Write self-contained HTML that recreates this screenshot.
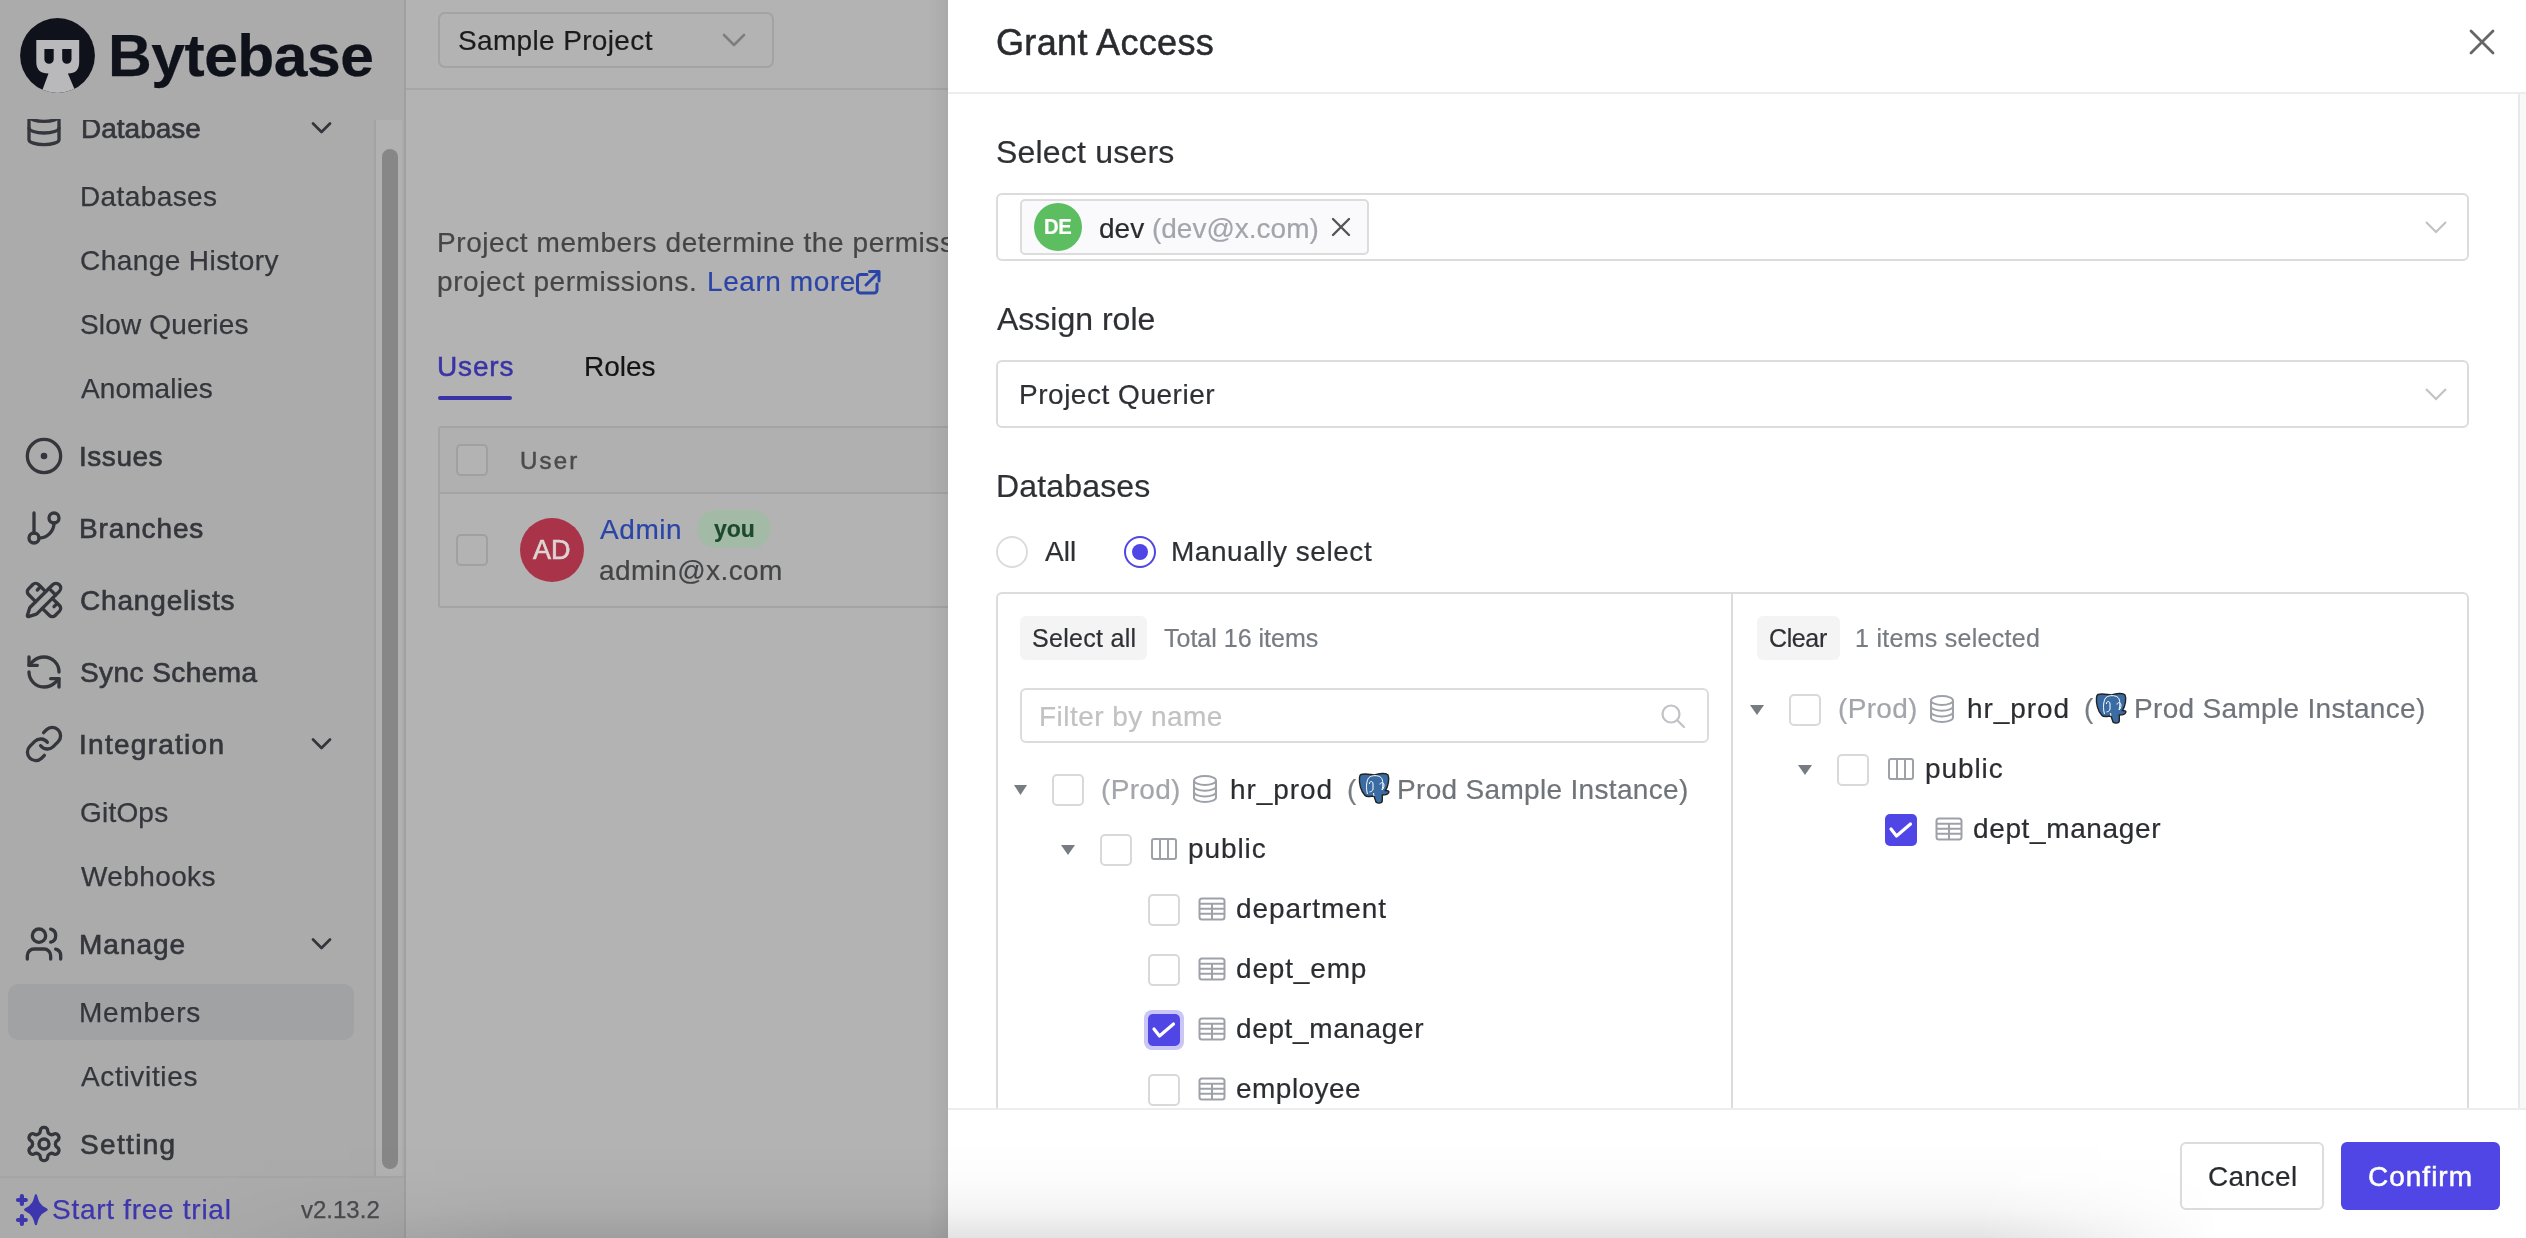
<!DOCTYPE html>
<html><head><meta charset="utf-8">
<style>
*{box-sizing:border-box;margin:0;padding:0}
html,body{width:2526px;height:1238px;overflow:hidden;background:#b3b3b3;font-family:"Liberation Sans",sans-serif}
.a{position:absolute}
.t{position:absolute;line-height:1;white-space:nowrap;-webkit-text-stroke:0.2px currentColor}
.med{-webkit-text-stroke:0.65px currentColor}
#sbtext .t{-webkit-text-stroke-width:0.25px;-webkit-text-stroke-color:currentColor}
#sbtext .t.med{-webkit-text-stroke-width:0.65px}
.med2{-webkit-text-stroke:0.5px currentColor}
svg{position:absolute;left:0;top:0;overflow:visible}
</style></head><body><div style="position:absolute;left:0;top:0;width:2526px;height:1238px;will-change:transform">

<!-- ============ SIDEBAR (dimmed) ============ -->
<div class="a" id="sidebar" style="left:0;top:0;width:404px;height:1238px;background:#ababac"></div>
<div class="a" style="left:404px;top:0;width:2px;height:1238px;background:#a0a0a1"></div>
<!-- members highlight -->
<div class="a" style="left:8px;top:984px;width:346px;height:56px;border-radius:10px;background:#a1a2a4"></div>
<!-- scroll track -->
<div class="a" style="left:374px;top:120px;width:28px;height:1056px;background:#b1b1b1;border-left:2px solid #a3a3a4"></div>
<div class="a" style="left:382px;top:149px;width:16px;height:1020px;border-radius:8px;background:#878787"></div>
<!-- footer divider -->
<div class="a" style="left:0;top:1176px;width:404px;height:2px;background:#a5a5a7"></div>

<div id="sbtext" style="color:#34363b">
  <div class="a" style="left:0;top:120px;width:374px;height:1056px;overflow:hidden">
    <div class="t med" style="left:81px;top:-5px;font-size:28px">Database</div>
  </div>
  <div class="t" style="left:80px;top:183px;letter-spacing:0.4px;font-size:28px">Databases</div>
  <div class="t" style="left:80px;top:247px;letter-spacing:0.43px;font-size:28px">Change History</div>
  <div class="t" style="left:80px;top:311px;letter-spacing:0.18px;font-size:28px">Slow Queries</div>
  <div class="t" style="left:81px;top:375px;letter-spacing:0.12px;font-size:28px">Anomalies</div>
  <div class="t med" style="left:79px;top:443px;letter-spacing:0.54px;font-size:28px">Issues</div>
  <div class="t med" style="left:79px;top:515px;letter-spacing:0.86px;font-size:28px">Branches</div>
  <div class="t med" style="left:80px;top:587px;letter-spacing:0.83px;font-size:28px">Changelists</div>
  <div class="t med" style="left:80px;top:659px;letter-spacing:0.44px;font-size:28px">Sync Schema</div>
  <div class="t med" style="left:79px;top:731px;letter-spacing:1.27px;font-size:28px">Integration</div>
  <div class="t" style="left:80px;top:799px;letter-spacing:0.2px;font-size:28px">GitOps</div>
  <div class="t" style="left:81px;top:863px;letter-spacing:0.39px;font-size:28px">Webhooks</div>
  <div class="t med" style="left:79px;top:931px;letter-spacing:1px;font-size:28px">Manage</div>
  <div class="t" style="left:79px;top:999px;letter-spacing:0.77px;font-size:28px">Members</div>
  <div class="t" style="left:81px;top:1063px;letter-spacing:0.67px;font-size:28px">Activities</div>
  <div class="t med" style="left:80px;top:1131px;letter-spacing:1.33px;font-size:28px">Setting</div>
  <div class="t" style="left:52px;top:1196px;letter-spacing:0.72px;font-size:28px;color:#3d36ad">Start free trial</div>
  <div class="t" style="left:301px;top:1198px;font-size:24px;color:#4a4b4f">v2.13.2</div>
  <div class="t" style="left:108px;top:25.5px;font-size:60px;font-weight:bold;color:#0f121a;transform:scaleX(1.01);transform-origin:0 0;letter-spacing:-0.5px">Bytebase</div>
</div>

<svg width="406" height="1238" viewBox="0 0 406 1238">
  <!-- logo -->
  <defs><clipPath id="lc"><circle cx="57.5" cy="55.5" r="37.4"/></clipPath></defs>
  <circle cx="57.5" cy="55.5" r="37.4" fill="#0f121a"/>
  <path clip-path="url(#lc)" d="M36.3,40 H79.2 V62 Q79.2,73.5 67.9,73.5 L77,95 H40.5 L48.5,73.5 Q36.3,73.5 36.3,62 Z" fill="#b9b9bc"/>
  <path d="M44.4,48.9 H53.7 V59.2 A4.65,4.65 0 0 1 44.4,59.2 Z M62.2,48.9 H71.5 V59.2 A4.65,4.65 0 0 1 62.2,59.2 Z" fill="#0f121a"/>
  <g fill="none" stroke="#34363b" stroke-width="3.3" stroke-linecap="round" stroke-linejoin="round">
    <!-- database icon (clipped) -->
    <g transform="translate(24,108) scale(1.6667)" clip-path="url(#dbc)">
      <ellipse cx="12" cy="5" rx="9" ry="3" stroke-width="2"/>
      <path d="M3 5V19A9 3 0 0 0 21 19V5" stroke-width="2"/>
      <path d="M3 12A9 3 0 0 0 21 12" stroke-width="2"/>
    </g>
    <!-- chevrons -->
    <path d="M313,123.5 L321.5,132 L330,123.5" stroke-width="2.7"/>
    <path d="M313,739.5 L321.5,748 L330,739.5" stroke-width="2.7"/>
    <path d="M313,939.5 L321.5,948 L330,939.5" stroke-width="2.7"/>
    <!-- issues circle-dot -->
    <g transform="translate(24,436) scale(1.6667)">
      <circle cx="12" cy="12" r="10" stroke-width="2"/>
      <circle cx="12" cy="12" r="1" stroke-width="2"/>
    </g>
    <!-- branches -->
    <g transform="translate(24,508) scale(1.6667)">
      <line x1="6" x2="6" y1="3" y2="15" stroke-width="2"/>
      <circle cx="18" cy="6" r="3" stroke-width="2"/>
      <circle cx="6" cy="18" r="3" stroke-width="2"/>
      <path d="M18 9a9 9 0 0 1-9 9" stroke-width="2"/>
    </g>
    <!-- changelists pencil-ruler -->
    <g transform="translate(24,580) scale(1.6667)" stroke-width="2">
      <path d="M13 7 8.7 2.7a2.41 2.41 0 0 0-3.4 0L2.7 5.3a2.41 2.41 0 0 0 0 3.4L7 13"/>
      <path d="m8 6 2-2"/><path d="m18 16 2-2"/>
      <path d="m17 11 4.3 4.3c.94.94.94 2.46 0 3.4l-2.6 2.6c-.94.94-2.46.94-3.4 0L11 17"/>
      <path d="M21.174 6.812a1 1 0 0 0-3.986-3.987L3.842 16.174a2 2 0 0 0-.5.83l-1.321 4.352a.5.5 0 0 0 .623.622l4.353-1.32a2 2 0 0 0 .83-.497z"/>
      <path d="m15 5 4 4"/>
    </g>
    <!-- sync refresh-ccw -->
    <g transform="translate(24,652) scale(1.6667)" stroke-width="2">
      <path d="M21 12a9 9 0 0 0-9-9 9.75 9.75 0 0 0-6.74 2.74L3 8"/>
      <path d="M3 3v5h5"/>
      <path d="M3 12a9 9 0 0 0 9 9 9.75 9.75 0 0 0 6.74-2.74L21 16"/>
      <path d="M16 16h5v5"/>
    </g>
    <!-- integration link -->
    <g transform="translate(24,724) scale(1.6667)" stroke-width="2">
      <path d="M10 13a5 5 0 0 0 7.54.54l3-3a5 5 0 0 0-7.07-7.07l-1.72 1.71"/>
      <path d="M14 11a5 5 0 0 0-7.54-.54l-3 3a5 5 0 0 0 7.07 7.07l1.71-1.71"/>
    </g>
    <!-- manage users -->
    <g transform="translate(24,924) scale(1.6667)" stroke-width="2">
      <path d="M16 21v-2a4 4 0 0 0-4-4H6a4 4 0 0 0-4 4v2"/>
      <circle cx="9" cy="7" r="4"/>
      <path d="M22 21v-2a4 4 0 0 0-3-3.87"/>
      <path d="M16 3.13a4 4 0 0 1 0 7.75"/>
    </g>
    <!-- settings -->
    <g transform="translate(24,1124) scale(1.6667)" stroke-width="2">
      <path d="M12.22 2h-.44a2 2 0 0 0-2 2v.18a2 2 0 0 1-1 1.73l-.43.25a2 2 0 0 1-2 0l-.15-.08a2 2 0 0 0-2.73.73l-.22.38a2 2 0 0 0 .73 2.73l.15.1a2 2 0 0 1 1 1.72v.51a2 2 0 0 1-1 1.74l-.15.09a2 2 0 0 0-.73 2.73l.22.38a2 2 0 0 0 2.73.73l.15-.08a2 2 0 0 1 2 0l.43.25a2 2 0 0 1 1 1.73V20a2 2 0 0 0 2 2h.44a2 2 0 0 0 2-2v-.18a2 2 0 0 1 1-1.73l.43-.25a2 2 0 0 1 2 0l.15.08a2 2 0 0 0 2.73-.73l.22-.39a2 2 0 0 0-.73-2.73l-.15-.08a2 2 0 0 1-1-1.74v-.5a2 2 0 0 1 1-1.74l.15-.09a2 2 0 0 0 .73-2.73l-.22-.38a2 2 0 0 0-2.73-.73l-.15.08a2 2 0 0 1-2 0l-.43-.25a2 2 0 0 1-1-1.73V4a2 2 0 0 0-2-2z"/>
      <circle cx="12" cy="12" r="3"/>
    </g>
  </g>
  <defs><clipPath id="dbc"><rect x="-2" y="6.6" width="30" height="30"/></clipPath></defs>
  <!-- sparkles -->
  <path d="M35.9,1195.5 C37,1200 38,1205.5 46.5,1209.7 C38,1213.9 37,1219.4 35.9,1224 C34.8,1219.4 33.8,1213.9 25.3,1209.7 C33.8,1205.5 34.8,1200 35.9,1195.5 Z" fill="#3d36ad" stroke="#3d36ad" stroke-width="2.4" stroke-linejoin="round"/>
  <g stroke="#3d36ad" stroke-width="4.2" stroke-linecap="round">
    <path d="M18,1200 H25.8 M21.9,1196.1 V1203.9 M18,1220 H25.8 M21.9,1216.1 V1223.9"/>
  </g>
</svg>

<!-- ============ MAIN (dimmed) ============ -->
<div class="a" style="left:406px;top:88px;width:542px;height:2px;background:#a6a6a6"></div>
<div class="a" style="left:438px;top:12px;width:336px;height:56px;border:2px solid #a3a3a3;border-radius:7px"></div>
<div class="t" style="left:458px;top:27px;letter-spacing:0.35px;font-size:28px;color:#1b1b1b">Sample Project</div>
<svg width="948" height="1238"><path d="M724,35 L734,45 L744,35" fill="none" stroke="#7e7e7e" stroke-width="2.6" stroke-linecap="round" stroke-linejoin="round"/></svg>

<div class="t" style="left:437px;top:229px;letter-spacing:0.57px;font-size:28px;color:#454546">Project members determine the permissions of users within this project, including their</div>
<div class="t" style="left:437px;top:268px;letter-spacing:0.57px;font-size:28px;color:#454546">project permissions.</div>
<div class="t" style="left:707px;top:268px;letter-spacing:0.58px;font-size:28px;color:#2a44a8">Learn more</div>
<svg width="948" height="1238"><g fill="none" stroke="#2a44a8" stroke-width="3" stroke-linecap="round" stroke-linejoin="round">
  <path d="M867,274.5 H860.5 A3,3 0 0 0 857.5,277.5 V290 A3,3 0 0 0 860.5,293 H874 A3,3 0 0 0 877,290 V284"/>
  <path d="M866,285 L878.5,272.5 M869.5,271.5 H879 V281"/>
</g></svg>

<div class="t med2" style="left:437px;top:353px;letter-spacing:0.85px;font-size:28px;color:#3a33a6">Users</div>
<div class="a" style="left:438px;top:396px;width:74px;height:4px;border-radius:2px;background:#3a33a6"></div>
<div class="t" style="left:584px;top:353px;font-size:28px;color:#141414">Roles</div>

<!-- table -->
<div class="a" style="left:438px;top:426px;width:600px;height:182px;border:2px solid #a4a4a4;border-radius:3px"></div>
<div class="a" style="left:440px;top:428px;width:600px;height:64px;background:#b0b0b0"></div>
<div class="a" style="left:440px;top:492px;width:600px;height:2px;background:#a4a4a4"></div>
<div class="a" style="left:456px;top:444px;width:32px;height:32px;border:2px solid #a0a0a0;border-radius:5px;background:#b3b3b3"></div>
<div class="t med2" style="left:520px;top:449px;letter-spacing:2.2px;font-size:24px;color:#4a4b4d">User</div>
<div class="a" style="left:456px;top:534px;width:32px;height:32px;border:2px solid #a0a0a0;border-radius:5px"></div>
<div class="a" style="left:520px;top:518px;width:64px;height:64px;border-radius:50%;background:#a93449"></div>
<div class="t med" style="left:533px;top:537px;font-size:27px;color:#dcd5d2;letter-spacing:0px">AD</div>
<div class="t" style="left:600px;top:516px;letter-spacing:0.58px;font-size:28px;color:#2a44a8">Admin</div>
<div class="a" style="left:697px;top:510px;width:74px;height:38px;border-radius:19px;background:#a3baa7"></div>
<div class="t" style="left:714px;top:518px;font-size:23px;font-weight:bold;color:#1c4a2c">you</div>
<div class="t" style="left:599px;top:557px;letter-spacing:0.4px;font-size:28px;color:#434446">admin@x.com</div>

<!-- drawer shadow on main -->
<div class="a" style="left:928px;top:0;width:20px;height:1238px;background:linear-gradient(to right,rgba(0,0,0,0),rgba(0,0,0,0.05))"></div>

<!-- ============ DRAWER ============ -->
<div class="a" id="drawer" style="left:948px;top:0;width:1578px;height:1238px;background:#fff">
</div>
<div class="a" style="left:948px;top:92px;width:1578px;height:2px;background:#ededee"></div>
<div class="a" style="left:2518px;top:94px;width:2px;height:1014px;background:#e9e9ec"></div>
<div class="a" style="left:2520px;top:94px;width:6px;height:1014px;background:#f8f8f9"></div>
<div class="t med2" style="left:996px;top:25px;letter-spacing:0.34px;font-size:36px;color:#292b2f">Grant Access</div>

<div class="t" style="left:996px;top:136px;letter-spacing:0.2px;font-size:32px;color:#2e3034">Select users</div>
<div class="a" style="left:996px;top:193px;width:1473px;height:68px;border:2px solid #dcdcdd;border-radius:6px"></div>
<div class="a" style="left:1020px;top:199px;width:349px;height:56px;border:2px solid #dcdcdd;border-radius:5px;background:#fafafc"></div>
<div class="a" style="left:1034px;top:203px;width:48px;height:48px;border-radius:50%;background:#5dbe61"></div>
<div class="t" style="left:1044px;top:216px;font-size:22px;font-weight:bold;color:#fff;letter-spacing:-0.5px;transform:scaleX(0.92);transform-origin:0 0">DE</div>
<div class="t" style="left:1099px;top:215px;font-size:28px;color:#292b2f">dev <span style="color:#a3a5ab">(dev@x.com)</span></div>

<div class="t" style="left:997px;top:303px;font-size:32px;color:#2e3034">Assign role</div>
<div class="a" style="left:996px;top:360px;width:1473px;height:68px;border:2px solid #dcdcdd;border-radius:6px"></div>
<div class="t" style="left:1019px;top:381px;letter-spacing:0.52px;font-size:28px;color:#2e3034">Project Querier</div>

<div class="t" style="left:996px;top:470px;letter-spacing:0.16px;font-size:32px;color:#2e3034">Databases</div>
<div class="a" style="left:996px;top:536px;width:32px;height:32px;border:2px solid #dcdcdd;border-radius:50%"></div>
<div class="t" style="left:1045px;top:538px;font-size:28px;color:#2e3034">All</div>
<div class="a" style="left:1124px;top:536px;width:32px;height:32px;border:2px solid #4f46e5;border-radius:50%"></div>
<div class="a" style="left:1132px;top:544px;width:16px;height:16px;border-radius:50%;background:#4f46e5"></div>
<div class="t" style="left:1171px;top:538px;letter-spacing:0.55px;font-size:28px;color:#2e3034">Manually select</div>

<!-- transfer -->
<div class="a" style="left:996px;top:592px;width:1473px;height:560px;border:2px solid #dcdcdd;border-radius:6px"></div>
<div class="a" style="left:1731px;top:594px;width:2px;height:516px;background:#dcdcdd"></div>
<div class="a" style="left:1020px;top:616px;width:127px;height:44px;border-radius:6px;background:#f4f4f4"></div>
<div class="t" style="left:1032px;top:626px;letter-spacing:0.29px;font-size:25px;color:#2e3034">Select all</div>
<div class="t" style="left:1164px;top:626px;font-size:25px;color:#767c82">Total 16 items</div>
<div class="a" style="left:1020px;top:688px;width:689px;height:55px;border:2px solid #dcdcdd;border-radius:6px"></div>
<div class="t" style="left:1039px;top:703px;letter-spacing:0.46px;font-size:28px;color:#c2c2c2">Filter by name</div>

<div class="a" style="left:1757px;top:616px;width:83px;height:44px;border-radius:6px;background:#f4f4f4"></div>
<div class="t" style="left:1769px;top:626px;letter-spacing:-0.38px;font-size:25px;color:#2e3034">Clear</div>
<div class="t" style="left:1855px;top:626px;letter-spacing:0.28px;font-size:25px;color:#767c82">1 items selected</div>

<!-- left tree -->
<div class="t" style="left:1101px;top:776px;letter-spacing:0.32px;font-size:28px;color:#a3a5ab">(Prod)</div>
<div class="t" style="left:1230px;top:776px;letter-spacing:0.92px;font-size:28px;color:#2b2d31">hr_prod</div>
<div class="t" style="left:1347px;top:776px;font-size:28px;color:#767c82">(</div>
<div class="t" style="left:1397px;top:776px;letter-spacing:0.32px;font-size:28px;color:#6f747a">Prod Sample Instance)</div>
<div class="t" style="left:1188px;top:835px;letter-spacing:0.9px;font-size:28px;color:#2b2d31">public</div>
<div class="t" style="left:1236px;top:895px;letter-spacing:0.92px;font-size:28px;color:#2b2d31">department</div>
<div class="t" style="left:1236px;top:955px;letter-spacing:0.84px;font-size:28px;color:#2b2d31">dept_emp</div>
<div class="t" style="left:1236px;top:1015px;letter-spacing:0.63px;font-size:28px;color:#2b2d31">dept_manager</div>
<div class="t" style="left:1236px;top:1075px;letter-spacing:0.47px;font-size:28px;color:#2b2d31">employee</div>

<!-- right tree -->
<div class="t" style="left:1838px;top:695px;letter-spacing:0.32px;font-size:28px;color:#a3a5ab">(Prod)</div>
<div class="t" style="left:1967px;top:695px;letter-spacing:0.92px;font-size:28px;color:#2b2d31">hr_prod</div>
<div class="t" style="left:2084px;top:695px;font-size:28px;color:#767c82">(</div>
<div class="t" style="left:2134px;top:695px;letter-spacing:0.32px;font-size:28px;color:#6f747a">Prod Sample Instance)</div>
<div class="t" style="left:1925px;top:755px;letter-spacing:0.9px;font-size:28px;color:#2b2d31">public</div>
<div class="t" style="left:1973px;top:815px;letter-spacing:0.63px;font-size:28px;color:#2b2d31">dept_manager</div>

<!-- checkboxes -->
<div class="a" style="left:1052px;top:774px;width:32px;height:32px;border:2px solid #d9d9da;border-radius:5px"></div>
<div class="a" style="left:1100px;top:834px;width:32px;height:32px;border:2px solid #d9d9da;border-radius:5px"></div>
<div class="a" style="left:1148px;top:894px;width:32px;height:32px;border:2px solid #d9d9da;border-radius:5px"></div>
<div class="a" style="left:1148px;top:954px;width:32px;height:32px;border:2px solid #d9d9da;border-radius:5px"></div>
<div class="a" style="left:1144px;top:1010px;width:40px;height:40px;border-radius:8px;background:#cac7f6"></div>
<div class="a" style="left:1148px;top:1014px;width:32px;height:32px;border-radius:5px;background:#4f46e5"></div>
<div class="a" style="left:1148px;top:1074px;width:32px;height:32px;border:2px solid #d9d9da;border-radius:5px"></div>

<div class="a" style="left:1789px;top:694px;width:32px;height:32px;border:2px solid #d9d9da;border-radius:5px"></div>
<div class="a" style="left:1837px;top:754px;width:32px;height:32px;border:2px solid #d9d9da;border-radius:5px"></div>
<div class="a" style="left:1885px;top:814px;width:32px;height:32px;border-radius:5px;background:#4f46e5"></div>

<!-- drawer vector icons -->
<svg width="2526" height="1238">
  <!-- header close -->
  <path d="M2471,31 L2493,53 M2493,31 L2471,53" stroke="#666" stroke-width="2.8" stroke-linecap="round"/>
  <!-- tag close -->
  <path d="M1333,219 L1349,235 M1349,219 L1333,235" stroke="#555" stroke-width="2.4" stroke-linecap="round"/>
  <!-- select arrows -->
  <path d="M2426,222 L2436,232 L2446,222" fill="none" stroke="#c2c2c6" stroke-width="2.2"/>
  <path d="M2426,389 L2436,399 L2446,389" fill="none" stroke="#c2c2c6" stroke-width="2.2"/>
  <!-- search -->
  <circle cx="1671" cy="714" r="8.5" fill="none" stroke="#c2c2c6" stroke-width="2.2"/>
  <path d="M1677.5,720.5 L1684,727" stroke="#c2c2c6" stroke-width="2.2" stroke-linecap="round"/>
  <!-- carets -->
  <g fill="#767c82">
    <path d="M1014,785 H1027 L1020.5,795 Z"/>
    <path d="M1061,845 H1075 L1068,855 Z"/>
    <path d="M1750,705 H1764 L1757,715 Z"/>
    <path d="M1798,765 H1812 L1805,775 Z"/>
  </g>
  <!-- checkmarks -->
  <g fill="none" stroke="#fff" stroke-width="3.2" stroke-linecap="round" stroke-linejoin="round">
    <path d="M1154,1029 L1159.5,1036 L1173.5,1024"/>
    <path d="M1891,829 L1896.5,836 L1910.5,824"/>
  </g>
  <g fill="none" stroke="#9ea2a8" stroke-width="2">
    <!-- db icons -->
    <g id="dbi">
      <ellipse cx="1205" cy="780.5" rx="11" ry="4.5"/>
      <path d="M1194,780.5 V797.5 A11,4.5 0 0 0 1216,797.5 V780.5"/>
      <path d="M1194,786.2 A11,4.5 0 0 0 1216,786.2"/>
      <path d="M1194,791.9 A11,4.5 0 0 0 1216,791.9"/>
    </g>
    <use href="#dbi" x="737" y="-80"/>
    <!-- schema icons -->
    <g id="sci">
      <rect x="1152" y="839" width="24" height="20" rx="2"/>
      <path d="M1160,839 V859 M1168,839 V859"/>
    </g>
    <use href="#sci" x="737" y="-80"/>
    <!-- table icons -->
    <g id="tbi">
      <rect x="1199.5" y="898.5" width="25" height="21" rx="2.5"/>
      <path d="M1199.5,903.7 H1224.5 M1199.5,908.7 H1224.5 M1199.5,913.7 H1224.5 M1212,903.7 V919.5"/>
    </g>
    <use href="#tbi" x="0" y="60"/>
    <use href="#tbi" x="0" y="120"/>
    <use href="#tbi" x="0" y="180"/>
    <use href="#tbi" x="737" y="-80"/>
  </g>
  <!-- elephants -->
  <g id="pg">
    <path d="M1361,774.5 C1366,773 1371,775 1374.5,775 C1379,773.5 1386,772.5 1388,775 C1389.5,778 1388.5,786 1385.5,790.5 C1387.5,790.5 1389.5,791 1388.7,792.5 C1388,794.5 1384,795 1382.3,795 L1382.3,800.5 C1382.3,804 1375.8,804 1375.5,800.5 L1374,796 C1371,796 1367,797.5 1365,795.5 C1360.5,791 1359,783 1359.5,777.5 C1359.7,775.5 1360,774.8 1361,774.5 Z" fill="#3a6ca3" stroke="#222" stroke-width="1.4"/>
    <path d="M1367.5,794 C1366,789 1366,781 1369,777.5 C1372,775 1378,775 1381,777.5 C1383.5,780 1383,786 1382,790 M1369.5,784 C1369,781 1373,780.5 1373,784 L1373,789 C1373,791 1371,791.5 1369.5,792 M1380,784.5 C1380,782 1384,782 1384,785 C1384,787.5 1383,789 1382,790 M1374,796 L1373.5,793" fill="none" stroke="#fff" stroke-width="1"/>
  </g>
  <use href="#pg" x="737" y="-80"/>
</svg>

<!-- footer -->
<div class="a" style="left:948px;top:1108px;width:1578px;height:130px;background:#fff"></div>
<div class="a" style="left:948px;top:1108px;width:1578px;height:2px;background:#ededee"></div>
<div class="a" style="left:2180px;top:1142px;width:144px;height:68px;border:2px solid #dcdcdd;border-radius:6px;background:#fff"></div>
<div class="t" style="left:2208px;top:1163px;letter-spacing:0.4px;font-size:28px;color:#292b2f">Cancel</div>
<div class="a" style="left:2341px;top:1142px;width:159px;height:68px;border-radius:6px;background:#4f46e5"></div>
<div class="t med2" style="left:2368px;top:1163px;letter-spacing:1.0px;font-size:28px;color:#fff">Confirm</div>

<!-- bottom vignette -->
<div class="a" style="left:0;top:1140px;width:2526px;height:98px;pointer-events:none;background:linear-gradient(to bottom,rgba(0,0,0,0) 0px,rgba(0,0,0,0.012) 40px,rgba(0,0,0,0.045) 70px,rgba(0,0,0,0.11) 98px);-webkit-mask-image:linear-gradient(to right,rgba(0,0,0,0) 180px,#000 520px,#000 1980px,rgba(0,0,0,0) 2220px)"></div>
</div></body></html>
